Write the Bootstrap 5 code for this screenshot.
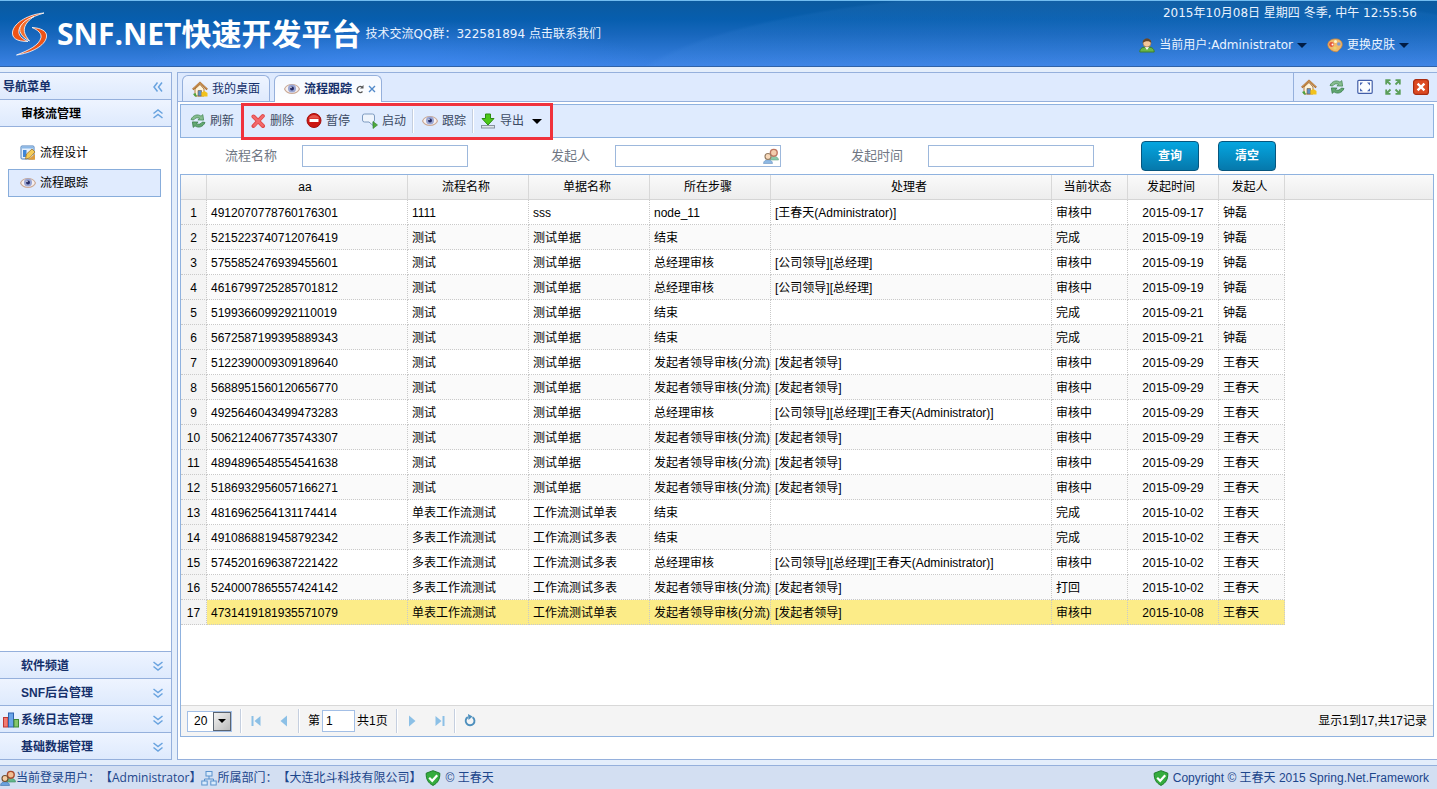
<!DOCTYPE html>
<html lang="zh-CN">
<head>
<meta charset="utf-8">
<meta name="viewport" content="width=device-width, initial-scale=1">
<title>SNF.NET快速开发平台</title>
<link href="https://cdn.jsdelivr.net/npm/bootstrap@5.3.0/dist/css/bootstrap.min.css" rel="stylesheet">
<style>
:root{--line:#95b0dc;--pale:#e0ebfe;--navy:#15306b}
body{font:12px/16px "Liberation Sans","Noto Sans CJK SC",sans-serif;color:#000;background:#e4eefb;text-spacing-trim:space-all}
button,input,select{font:inherit;color:inherit}
button{background:none;border:0;padding:0}
a{text-decoration:none;color:inherit}
svg{display:block;flex:none}
.ic{width:16px;height:16px}
.tahoma{font-family:"DejaVu Sans","Noto Sans CJK SC",sans-serif}
.topbar{height:67px;color:#eaf3ff;border-top:1px solid #72bdf0;border-bottom:1px solid #2f62a8;
 background:
 radial-gradient(ellipse 500px 110px at 78% 150%,rgba(110,175,255,.07) 98%,transparent 100%),
 radial-gradient(ellipse 260px 46px at 400px 66px,rgba(70,145,255,.45),transparent),
 linear-gradient(#0b5a9f,#075eae 28%,#1867bd 52%,#3b82e4)}
.topbar h1{font:bold 30px/40px "Open Sans","Noto Sans CJK SC",sans-serif;color:#fff}
.caret{border:5px solid transparent;border-top-color:#001c44;border-bottom:0}
.work{margin:5px 0;gap:5px;min-height:0}
.side{width:172px;border:1px solid var(--line);border-left:0;background:#fff}
.bar{height:27px;padding:1px 5px 0 3px;background:linear-gradient(#eef4ff,#deeafd);color:var(--navy);font-weight:bold;border-bottom:1px solid var(--line)}
.bar.up{border-top:1px solid var(--line);border-bottom:0}
.bar .slot{width:18px}
.nodes{padding:12px 10px 0 8px}
.node{height:28px;margin-bottom:2px;border:1px solid transparent;padding:0 11px}
.node.on{background:var(--pale);border-color:#88addb}
.mainbox{border:1px solid var(--line);border-right:0;background:#fff;min-width:0}
.tabs{height:29px;background:#deeafe;border-bottom:1px solid var(--line)}
.tabx{height:26px;padding:0 9px;border:1px solid var(--line);border-bottom:0;border-radius:6px 6px 0 0;color:var(--navy);background:linear-gradient(#eef4ff,#dfeafd)}
.tabx.on{background:linear-gradient(#f4f8ff,#fff);font-weight:bold;height:27px;margin-bottom:-1px;padding-right:5px}
.tools{border-left:1px solid var(--line);gap:12px;padding:0 8px 0 7px}
.pane{min-height:0;padding:2px 3px 22px 2px}
.toolbar{height:34px;padding:0 3px;border:1px solid #8fb2df;background:#dfebfe;color:#3c4a63}
.hot{height:31px;box-shadow:0 0 0 3px #f0323c}
.tb{height:28px;padding:0 6px;gap:4px;display:flex;align-items:center}
.sep{width:2px;height:24px;background:#c5cfdf;border-right:1px solid #fff}
.search{height:36px;gap:25px;color:#707784}
.search label{width:97px;text-align:right;font-size:13px}
.search input{width:166px;height:22px;border:1px solid #9db8dc;background:#fff;padding:0 24px 0 4px}
.acts{gap:19px;padding-left:22px}
.go{width:58px;height:30px;border:1px solid #07567e;border-radius:4px;background:linear-gradient(#05a6e0,#0678ab);color:#fff;font-weight:bold}
.grid{border:1px solid #8fb2df;min-height:0}
.ghead{background:linear-gradient(#fafafa,#ededed);border-bottom:1px solid #d5d5d5}
.data{table-layout:fixed;border-collapse:separate;border-spacing:0;width:1104px}
.data th{height:24px;font-weight:normal;text-align:center;border-right:1px solid #d8d8d8;padding:0 4px 0 0}
.data td{height:25px;padding:1px 0 0 4px;border-right:1px dotted #c9c9c9;border-bottom:1px dotted #c9c9c9;white-space:nowrap;overflow:hidden}
.data td:first-child{background:#f4f4f4;padding:1px 0 0;text-align:center}
.data td:nth-child(8){text-align:center;padding:1px 0 0}
.data tr:nth-child(even) td:not(:first-child){background:#fafafa}
.data tr.sel td:not(:first-child){background:#fcec88}
.pager{height:31px;padding:0 6px;background:#f4f4f4;border-top:1px solid #d8d8d8}
.pg{width:28px;height:24px;display:flex;align-items:center;justify-content:center}
.size{width:45px;height:21px;border:1px solid #a3bfe6;background:#fff}
.size select{width:100%;height:100%;border:0;appearance:none;background:none;padding:0 0 0 6px}
.drop{right:0;top:0;width:18px;height:19px;border:1px solid #5b6470;background:linear-gradient(135deg,#f2f2f2,#bbb);pointer-events:none}
.drop .caret{border-width:4px 4px 0}
.pno{width:33px;height:22px;margin:0 2px;border:1px solid #a3bfe6;padding:0 3px}
.foot{height:24px;background:#d3dff2;border-top:1px solid var(--line);color:#1c468c}
.humanist{font-family:"Open Sans","Noto Sans CJK SC",sans-serif}
.turn-l{transform:rotate(90deg)}
.turn-u{transform:rotate(180deg)}
.caret.dark{border-top-color:#000}
</style>
</head>
<body>
<svg width="0" height="0" class="position-absolute" aria-hidden="true">
 <symbol id="home" viewBox="0 0 16 16"><path d="M3 8v7h9V8L8 3.500z" fill="#fdf3da" stroke="#b9813f"/><path d="M.8 8.500 8 1.800l7.200 6.700" fill="none" stroke="#a96a2c" stroke-width="2"/><path d="M1.300 7.800 8 1.700l6.700 6.100" fill="none" stroke="#e5b877" stroke-width=".7"/><path d="M6 15V9.500h3.500V15z" fill="#5d8fc8" stroke="#7b5a36" stroke-width=".6"/><path d="M9.500 15.500v-4l3-1.500 3 2v3.500z" fill="#f2c21c"/><path d="M1 13l2 2.500h2L3.500 12z" fill="#4da23f"/></symbol>
 <symbol id="refresh" viewBox="0 0 16 16"><path d="M1 6.500C3 1.800 8 .8 11 3.200L12.800 1.600l.8 5.500-5.700-.2 1.700-1.600C7.500 4.200 5 4.800 3.600 7z" fill="#86bd8f" stroke="#478a57" stroke-width=".8"/><path d="M15 9.500c-2 4.700-7 5.700-10 3.300L3.200 14.400l-.8-5.500 5.700.2-1.700 1.600c2.100 1.100 4.600.5 6-1.700z" fill="#62a871" stroke="#397c4a" stroke-width=".8"/></symbol>
 <symbol id="eye" viewBox="0 0 16 16"><path d="M.5 8C3 2 13 2 15.500 8 13 14 3 14 .5 8z" fill="#f6f0f0" stroke="#cbab98" stroke-width="1.200"/><circle cx="8" cy="7.600" r="4" fill="#9aa6d4"/><circle cx="8" cy="7.600" r="2" fill="#262c66"/><circle cx="7" cy="6.500" r=".7" fill="#fff"/></symbol>
 <symbol id="del" viewBox="0 0 16 16"><path d="M3.500 3.500l9.500 9.500M12.800 3 3.500 13" stroke="#e04848" stroke-width="4" stroke-linecap="round"/><path d="M3.500 3.500 12.700 12.700M12.700 3.200 4 12.700" stroke="#f2696b" stroke-width="2.400" stroke-linecap="round"/></symbol>
 <symbol id="stop" viewBox="0 0 16 16"><circle cx="8" cy="7.500" r="7" fill="#cc1712" stroke="#a30f0c"/><path d="M2.500 5.500a6 6 0 0 1 11 0z" fill="#e5564d"/><rect x="3.500" y="6" width="9" height="3" fill="#fff"/></symbol>
 <symbol id="talk" viewBox="0 0 16 16"><path d="M2.500 1h8q2 0 2 2v4q0 2-1.500 2v3.500L7 9H2.500q-2 0-2-2V3q0-2 2-2z" fill="#eef4fc" stroke="#7e9bc0"/><path d="M11 8.500v7l4.500-3.500z" fill="#4faa3c" stroke="#2d8028" stroke-width=".6"/></symbol>
 <symbol id="down" viewBox="0 0 16 16"><rect x="1.500" y="12.500" width="13" height="2.500" fill="#dfe5ea" stroke="#8592a0"/><path d="M5.500 1h5v4.500H14L8 12 2 5.500h3.500z" fill="#4cc818" stroke="#2b8c10"/></symbol>
 <symbol id="user" viewBox="0 0 16 16"><path d="M.8 15c0-4 3-5 7.200-5s7.200 1 7.200 5z" fill="#6ab648" stroke="#3c812c"/><path d="M6 10h4l-2 3z" fill="#fff"/><circle cx="8" cy="6" r="4" fill="#f4c79a" stroke="#9b6b3d" stroke-width=".6"/><path d="M3.800 6C3 0 13 0 12.200 6 11 3.800 6 3.600 3.800 6z" fill="#654527"/></symbol>
 <symbol id="palette" viewBox="0 0 16 16"><path d="M.8 8C1 3 6 1.500 10 2s6 4 5 7c-.8 2.600-2.500 3-3.500 4.500s-3 1.500-5 .8S1 11 .8 8z" fill="#f0b868" stroke="#c98740" stroke-width=".8"/><circle cx="4.500" cy="7.500" r="2.400" fill="#e4573b"/><circle cx="5.500" cy="7.500" r="1" fill="#fff"/><circle cx="8.500" cy="4.600" r="1.500" fill="#fff3c8"/><circle cx="11.800" cy="7" r="1.800" fill="#7b9bd2"/><circle cx="8" cy="11" r="1.600" fill="#e9d36a"/></symbol>
 <symbol id="full" viewBox="0 0 16 16"><rect x=".8" y="1.300" width="14.400" height="13" rx="1" fill="#fbfdff" stroke="#425ea8" stroke-width="1.200"/><path d="M3 3.500h3l-3 3zM13 3.500h-3l3 3zM3 12.300h3l-3-3zM13 12.300h-3l3-3z" fill="#4867b5"/></symbol>
 <symbol id="expand" viewBox="0 0 16 16" fill="none" stroke="#5b9e59" stroke-width="1.800"><path d="M1.200 5.500V1.200h4.300M2 2l3.500 3.500M14.800 5.500V1.200h-4.300M14 2l-3.500 3.500M1.200 10.500v4.300h4.300M2 14l3.500-3.500M14.800 10.500v4.300h-4.300M14 14l-3.500-3.500"/></symbol>
 <symbol id="close" viewBox="0 0 16 16"><rect x=".6" y=".6" width="14.800" height="14.800" rx="2.500" fill="#dc4a22" stroke="#a92c10" stroke-width="1.200"/><path d="M4.600 4.600l6.800 6.800M11.400 4.600l-6.800 6.800" stroke="#fff" stroke-width="2.400"/></symbol>
 <symbol id="edit" viewBox="0 0 16 16"><rect x="1" y="1" width="13" height="13" rx="1" fill="#e5f0fc" stroke="#4a7db8"/><path d="M1.500 1.500h12v2h-12z" fill="#8bb9e8"/><path d="M3 5h3.500v7H3z" fill="#3f86d8"/><path d="M5.500 14l1-5 5.500-5 3 3-5.500 6z" fill="#f4cc58" stroke="#a27528" stroke-width=".8"/><path d="M8 14.800h7V9z" fill="#dd9d3e"/></symbol>
 <symbol id="chart" viewBox="0 0 16 16"><rect x=".5" y="5.500" width="4.500" height="9.500" fill="#f27b72" stroke="#bd3732"/><rect x="5.500" y="1" width="5" height="14" fill="#6ba5e9" stroke="#2e62ae"/><rect x="11" y="7.500" width="4.500" height="7.500" fill="#86c66b" stroke="#3f8a34"/></symbol>
 <symbol id="people" viewBox="0 0 16 16"><path d="M6 12c0-5 9.500-5 9.500 0z" fill="#63b68b" stroke="#3b8960" stroke-width=".6"/><circle cx="10.800" cy="4.800" r="3.400" fill="#f1bd92" stroke="#a8482c" stroke-width="1.400"/><path d="M.5 15.500c0-5 9-5 9 0z" fill="#69a2dc" stroke="#3b6fab" stroke-width=".6"/><circle cx="5" cy="8.500" r="3" fill="#f6cda4" stroke="#70502f" stroke-width="1.100"/></symbol>
 <symbol id="org" viewBox="0 0 16 16" fill="#d9eafb" stroke="#5b93ce"><path d="M8 6v3M3.500 11V9h9v2" fill="none"/><rect x="5" y="1.500" width="6" height="4.500"/><rect x=".8" y="11" width="5.400" height="4"/><rect x="9.800" y="11" width="5.400" height="4"/></symbol>
 <symbol id="shield" viewBox="0 0 16 16"><path d="M8 .7l6.800 2.500C15 9 13 13 8 15.400 3 13 1 9 1.200 3.200z" fill="#35ac3d" stroke="#1d7d2a"/><path d="M4.200 7.800l3 3 5-5.600" fill="none" stroke="#fff" stroke-width="2.200"/></symbol>
 <symbol id="chev" viewBox="0 0 16 16"><path d="M3.500 4 8 7.500 12.500 4M3.500 8.500 8 12l4.500-3.500" fill="none" stroke="#69a3df" stroke-width="1.500"/></symbol>
 <symbol id="prev" viewBox="0 0 16 16"><path d="M11 2.500v11L4.500 8z" fill="#8cc0e6"/></symbol>
 <symbol id="first" viewBox="0 0 16 16"><path d="M12.500 3v10L6.500 8zM3.500 3h2v10h-2z" fill="#8cc0e6"/></symbol>
 <symbol id="next" viewBox="0 0 16 16"><path d="M5 2.500v11L11.500 8z" fill="#8cc0e6"/></symbol>
 <symbol id="last" viewBox="0 0 16 16"><path d="M3.500 3v10L9.500 8zM10.500 3h2v10h-2z" fill="#8cc0e6"/></symbol>
 <symbol id="reload" viewBox="0 0 16 16"><path d="M10.500 4.200A4.400 4.400 0 1 1 5.800 4.100" fill="none" stroke="#4d8fbd" stroke-width="1.900"/><path d="M6 1l4.500 2.500L6.500 7z" fill="#4d8fbd"/></symbol>
</svg>

<div class="d-flex flex-column vh-100 overflow-hidden">
 <header class="topbar d-flex justify-content-between flex-shrink-0">
  <div class="d-flex align-items-center ps-2">
   <svg width="41" height="48" viewBox="8 9 41 48" class="me-2"><g stroke="#fff" stroke-width=".8" stroke-linejoin="round"><path d="M44 12C30 13 14 21 12.500 31c-.6 6 4 9.500 15.500 9.500C22 38 17.500 34 19 28.500 21 21 31 16 44 12z" fill="#ee5316"/><path d="M34 15.500C24 19 18.500 25 20 30.500c1.300 4 4.500 7 9.500 9.500-3-4-6-8-5-13 1-4.500 5-8.500 9.500-11.500z" fill="#f3702f"/><path d="M32 26.500c9 .5 15.500 3.500 14.500 9.500C45 45 31 52 16.500 54c12-4.500 23-10 24.500-17.500.7-4-3-7.500-9-10z" fill="#ee5316"/></g></svg>
   <h1 class="mb-0">SNF.NET快速开发平台</h1>
   <span class="tahoma ms-1">技术交流QQ群：322581894 <a href="#">点击联系我们</a></span>
  </div>
  <div class="tahoma d-flex flex-column align-items-end pe-3 pt-1">
   <div class="me-1">2015年10月08日 星期四 冬季, 中午 12:55:56</div>
   <div class="d-flex mt-3 me-2">
    <button type="button" class="d-flex align-items-center me-3"><svg class="ic me-1"><use href="#user"/></svg>当前用户:Administrator<span class="caret ms-1"></span></button>
    <button type="button" class="d-flex align-items-center ms-1 me-1"><svg class="ic me-1"><use href="#palette"/></svg>更换皮肤<span class="caret ms-1"></span></button>
   </div>
  </div>
 </header>

 <div class="work d-flex flex-grow-1">
  <nav class="side d-flex flex-column flex-shrink-0">
   <div class="bar d-flex align-items-center justify-content-between">导航菜单<button type="button" aria-label="折叠"><svg class="ic turn-l"><use href="#chev"/></svg></button></div>
   <a href="#" class="bar d-flex align-items-center text-black"><span class="slot"></span><span class="flex-grow-1">审核流管理</span><svg class="ic turn-u"><use href="#chev"/></svg></a>
   <div class="nodes flex-grow-1">
    <a href="#" class="node d-flex align-items-center gap-1"><svg class="ic"><use href="#edit"/></svg>流程设计</a>
    <a href="#" class="node on d-flex align-items-center gap-1"><svg class="ic"><use href="#eye"/></svg>流程跟踪</a>
   </div>
   <a href="#" class="bar up d-flex align-items-center"><span class="slot"></span><span class="flex-grow-1">软件频道</span><svg class="ic"><use href="#chev"/></svg></a>
   <a href="#" class="bar up d-flex align-items-center"><span class="slot"></span><span class="flex-grow-1">SNF后台管理</span><svg class="ic"><use href="#chev"/></svg></a>
   <a href="#" class="bar up d-flex align-items-center"><span class="slot"><svg class="ic"><use href="#chart"/></svg></span><span class="flex-grow-1">系统日志管理</span><svg class="ic"><use href="#chev"/></svg></a>
   <a href="#" class="bar up d-flex align-items-center"><span class="slot"></span><span class="flex-grow-1">基础数据管理</span><svg class="ic"><use href="#chev"/></svg></a>
  </nav>

  <main class="mainbox d-flex flex-column flex-grow-1">
   <div class="tabs d-flex flex-shrink-0">
    <div class="d-flex align-items-end gap-1 flex-grow-1 ps-1">
     <a href="#" class="tabx d-flex align-items-center"><svg class="ic me-1"><use href="#home"/></svg>我的桌面</a>
     <a href="#" class="tabx on d-flex align-items-center"><svg class="ic me-1"><use href="#eye"/></svg>流程跟踪
      <svg width="8" height="10" viewBox="1 0 8 10" class="ms-1"><path d="M7.500 7.500A3 3 0 1 1 7 3" fill="none" stroke="#555" stroke-width="1.300"/><path d="M8.500 1v3.500H5z" fill="#555"/></svg>
      <svg width="8" height="8" viewBox="0 0 8 8" class="ms-1"><path d="M1 1l6 6M7 1 1 7" stroke="#5189c9" stroke-width="1.400"/></svg></a>
    </div>
    <div class="tools d-flex align-items-center">
     <button type="button" aria-label="主页"><svg class="ic"><use href="#home"/></svg></button>
     <button type="button" aria-label="刷新"><svg class="ic"><use href="#refresh"/></svg></button>
     <button type="button" aria-label="全屏"><svg class="ic"><use href="#full"/></svg></button>
     <button type="button" aria-label="展开"><svg class="ic"><use href="#expand"/></svg></button>
     <button type="button" aria-label="关闭"><svg class="ic"><use href="#close"/></svg></button>
    </div>
   </div>

   <div class="pane d-flex flex-column flex-grow-1">
    <div class="toolbar d-flex align-items-center flex-shrink-0">
     <button type="button" class="tb me-1"><svg class="ic"><use href="#refresh"/></svg>刷新</button>
     <div class="hot d-flex align-items-center">
      <button type="button" class="tb"><svg class="ic"><use href="#del"/></svg>删除</button>
      <button type="button" class="tb"><svg class="ic"><use href="#stop"/></svg>暂停</button>
      <button type="button" class="tb"><svg class="ic"><use href="#talk"/></svg>启动</button>
      <span class="sep"></span>
      <button type="button" class="tb ps-2"><svg class="ic"><use href="#eye"/></svg>跟踪</button>
      <span class="sep"></span>
      <button type="button" class="tb pe-2"><svg class="ic"><use href="#down"/></svg>导出<span class="caret dark ms-1"></span></button>
     </div>
    </div>
    <form class="search d-flex align-items-center flex-shrink-0">
     <label for="f1">流程名称</label><input id="f1" type="text">
     <label for="f2">发起人</label>
     <div class="position-relative"><input id="f2" type="text" class="d-block"><svg class="ic position-absolute opacity-75" style="right:2px;top:3px"><use href="#people"/></svg></div>
     <label for="f3">发起时间</label><input id="f3" type="text">
     <div class="acts d-flex"><button type="button" class="go">查询</button><button type="button" class="go">清空</button></div>
    </form>
    <div class="grid d-flex flex-column flex-grow-1">
     <div class="flex-grow-1 overflow-hidden">
      <div class="ghead">
       <table class="data"><colgroup class="cols"></colgroup><thead><tr><th></th><th>aa</th><th>流程名称</th><th>单据名称</th><th>所在步骤</th><th>处理者</th><th>当前状态</th><th>发起时间</th><th>发起人</th></tr></thead></table>
      </div>
      <table class="data"><colgroup class="cols"></colgroup><tbody id="rows"></tbody></table>
     </div>
     <div class="pager d-flex align-items-center flex-shrink-0">
      <div class="size position-relative"><select aria-label="每页行数"><option>20</option></select><span class="drop position-absolute d-flex align-items-center justify-content-center"><span class="caret dark"></span></span></div>
      <span class="sep ms-2"></span>
      <button type="button" class="pg" aria-label="首页"><svg class="ic"><use href="#first"/></svg></button>
      <button type="button" class="pg" aria-label="上一页"><svg class="ic"><use href="#prev"/></svg></button>
      <span class="sep me-2"></span>
      <label for="pno">第</label><input id="pno" class="pno" type="text" value="1"><span>共1页</span>
      <span class="sep ms-2"></span>
      <button type="button" class="pg" aria-label="下一页"><svg class="ic"><use href="#next"/></svg></button>
      <button type="button" class="pg" aria-label="末页"><svg class="ic"><use href="#last"/></svg></button>
      <span class="sep"></span>
      <button type="button" class="pg" aria-label="刷新列表"><svg class="ic"><use href="#reload"/></svg></button>
      <span class="ms-auto">显示1到17,共17记录</span>
     </div>
    </div>
   </div>
  </main>
 </div>

 <footer class="foot d-flex align-items-center flex-shrink-0 pe-2">
  <svg class="ic"><use href="#people"/></svg><span class="humanist">当前登录用户：【Administrator】</span>
  <svg class="ic"><use href="#org"/></svg><span class="humanist me-1">所属部门：【大连北斗科技有限公司】</span>
  <svg class="ic me-1"><use href="#shield"/></svg><span>© 王春天</span>
  <svg class="ic ms-auto me-1"><use href="#shield"/></svg><span>Copyright © 王春天 2015 Spring.Net.Framework</span>
 </footer>
</div>

<script src="https://cdn.jsdelivr.net/npm/bootstrap@5.3.0/dist/js/bootstrap.bundle.min.js"></script>
<script>
const widths=[26,201,121,121,121,281,76,91,66];
document.querySelectorAll('.cols').forEach(c=>c.innerHTML=widths.map(w=>`<col style="width:${w}px">`).join(''));
const S='发起者领导审核(分流)',L='[发起者领导]',G='[公司领导][总经理]',W='[王春天(Administrator)]';
const data=[
['4912070778760176301','1111','sss','node_11',W,'审核中','2015-09-17','钟磊'],
['5215223740712076419','测试','测试单据','结束','','完成','2015-09-19','钟磊'],
['5755852476939455601','测试','测试单据','总经理审核',G,'审核中','2015-09-19','钟磊'],
['4616799725285701812','测试','测试单据','总经理审核',G,'审核中','2015-09-19','钟磊'],
['5199366099292110019','测试','测试单据','结束','','完成','2015-09-21','钟磊'],
['5672587199395889343','测试','测试单据','结束','','完成','2015-09-21','钟磊'],
['5122390009309189640','测试','测试单据',S,L,'审核中','2015-09-29','王春天'],
['5688951560120656770','测试','测试单据',S,L,'审核中','2015-09-29','王春天'],
['4925646043499473283','测试','测试单据','总经理审核',G+W,'审核中','2015-09-29','王春天'],
['5062124067735743307','测试','测试单据',S,L,'审核中','2015-09-29','王春天'],
['4894896548554541638','测试','测试单据',S,L,'审核中','2015-09-29','王春天'],
['5186932956057166271','测试','测试单据',S,L,'审核中','2015-09-29','王春天'],
['4816962564131174414','单表工作流测试','工作流测试单表','结束','','完成','2015-10-02','王春天'],
['4910868819458792342','多表工作流测试','工作流测试多表','结束','','完成','2015-10-02','王春天'],
['5745201696387221422','多表工作流测试','工作流测试多表','总经理审核',G+W,'审核中','2015-10-02','王春天'],
['5240007865557424142','多表工作流测试','工作流测试多表',S,L,'打回','2015-10-02','王春天'],
['4731419181935571079','单表工作流测试','工作流测试单表',S,L,'审核中','2015-10-08','王春天']];
document.getElementById('rows').innerHTML=data.map((r,i)=>`<tr${i==16?' class="sel"':''}><td>${i+1}</td>${r.map(c=>`<td>${c}</td>`).join('')}</tr>`).join('');
</script>
</body>
</html>
